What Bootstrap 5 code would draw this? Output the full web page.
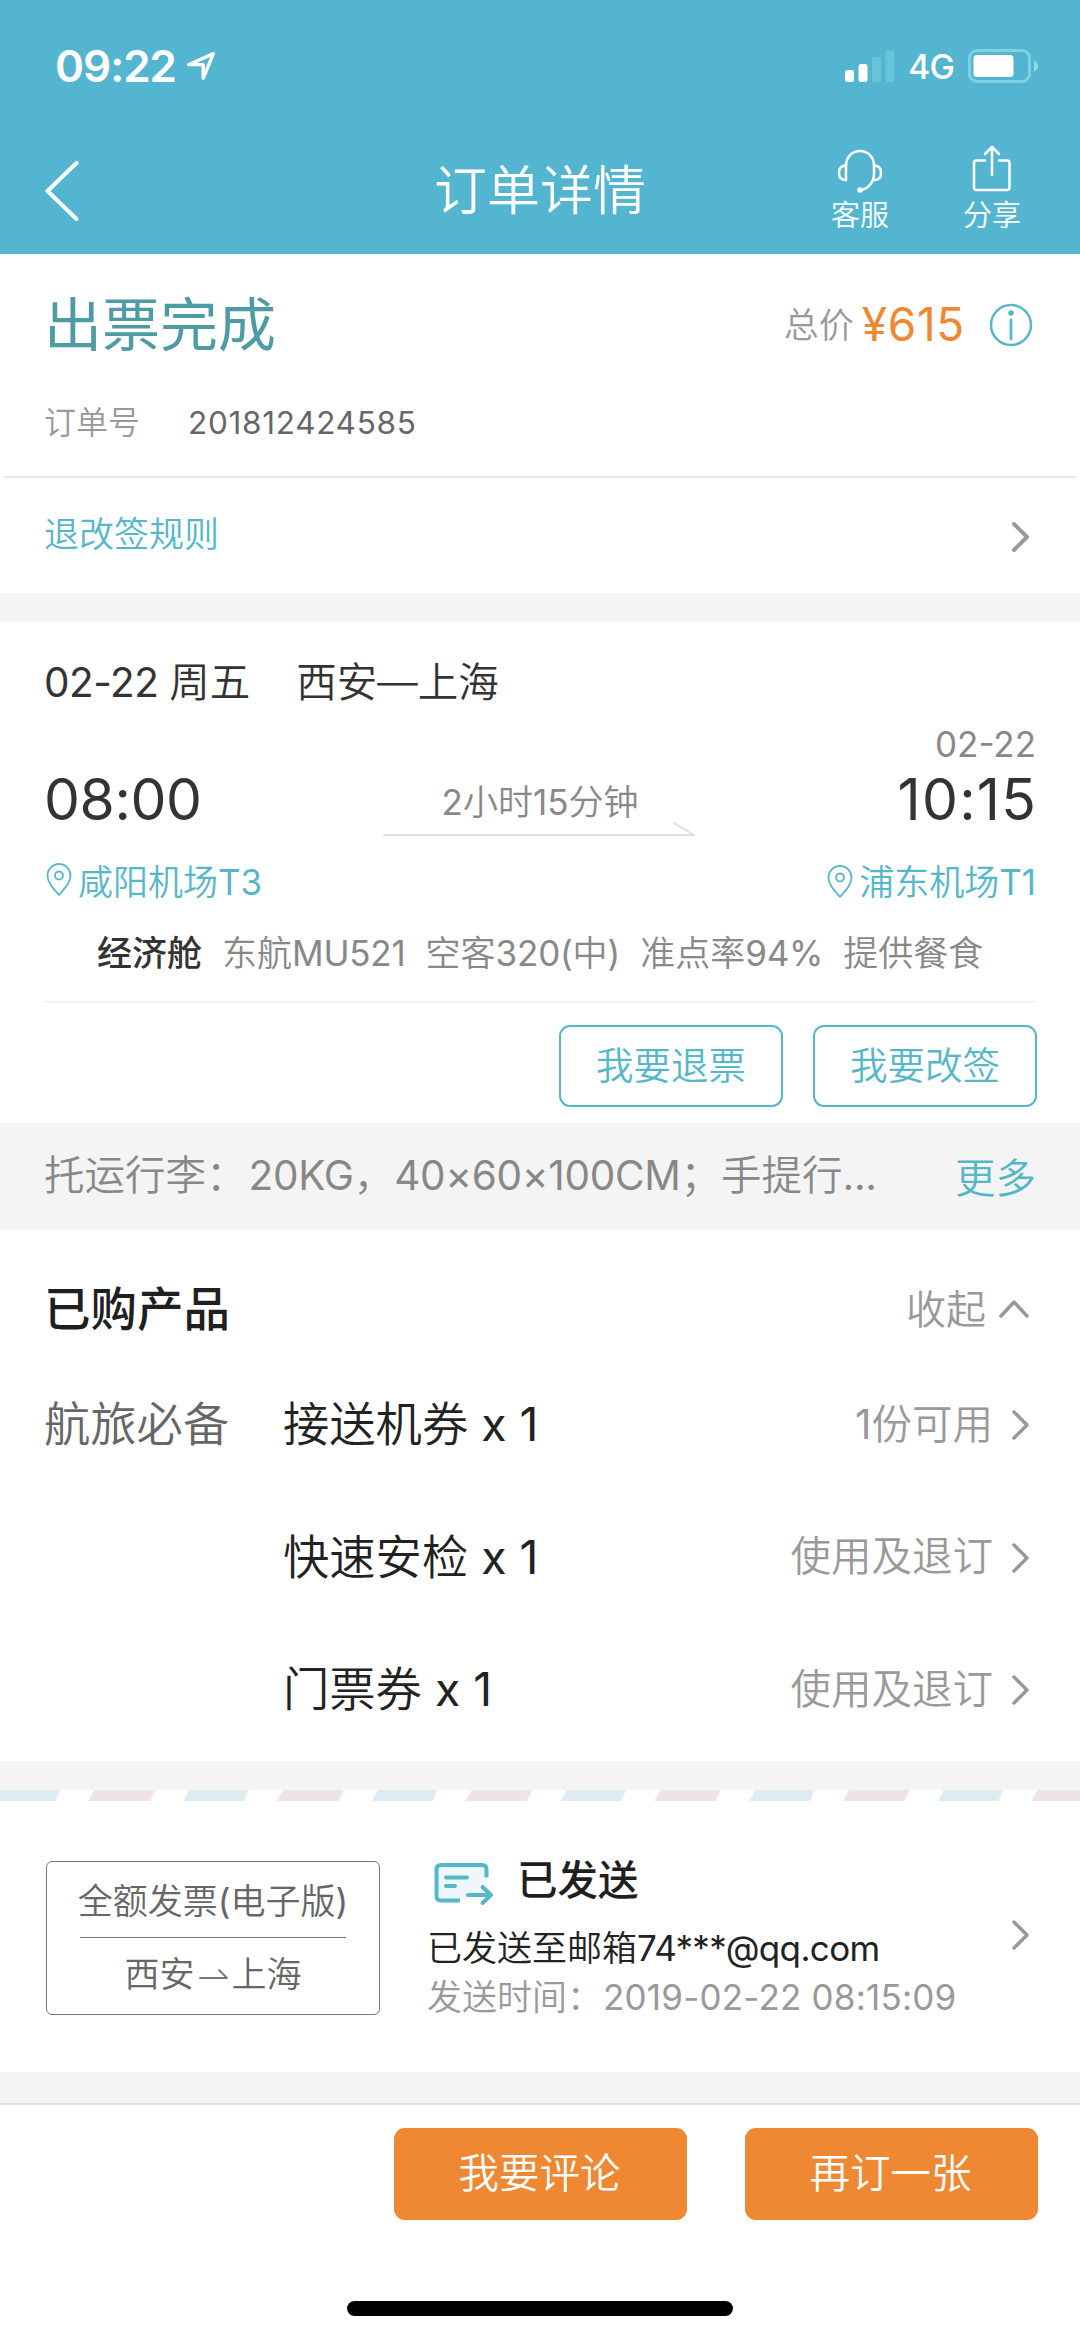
<!DOCTYPE html>
<html lang="zh-CN">
<head>
<meta charset="utf-8">
<meta name="viewport" content="width=device-width, initial-scale=1">
<title>订单详情</title>
<link href="https://cdn.jsdelivr.net/npm/bootstrap@5.3.0/dist/css/bootstrap.min.css" rel="stylesheet">
<style>
:root{--sky:#54b5d0;--teal:#56b7c9;--orange:#ee8833}
body{width:1080px;height:2339px;background:#fff;color:#222;font-family:Inter,"Noto Sans CJK SC",sans-serif;font-size:35px;line-height:1.2;font-weight:350;overflow:hidden}
svg{display:block;flex:none;fill:none;stroke-linecap:round;stroke-linejoin:round}
a{color:var(--teal);text-decoration:none}
.latin{font-weight:400}
.pad{padding-left:44px;padding-right:44px}
.g3{color:#333}.g6{color:#666}.g8{color:#888}.g9{color:#999}
.band{background:#f4f4f4;height:29px}
.band-end{height:31px}
.hair{height:2px;background:#e6e8e9}

.topbar{height:254px;background:var(--sky);color:#fff}
.statusbar{height:132px;padding:0 40px 0 55px}
.clock{font-size:44px;font-weight:600;letter-spacing:-1px}
.locate{margin-left:10px}
.net{font-size:34px;font-weight:450;letter-spacing:-.9px;margin:2px 14px 0 13px}
.titlebar{height:122px;padding-bottom:4px}
.titlebar h1{font-size:53px;font-weight:350;line-height:1;margin:0}
.side{width:300px}
.tools{padding-left:50px;gap:72px}
.tool{width:60px;font-size:29px;line-height:34px}

.state-row{height:142px;padding-right:46px}
.state{font-size:58px;font-weight:400;color:#4f9ba3;line-height:1;margin:0}
.cost{font-size:46px;color:var(--orange);letter-spacing:.7px;margin-right:-1px}
.orderno{height:80px;padding-bottom:26px;font-size:32px}
.orderno .num{font-size:31.5px;letter-spacing:.7px;margin-left:48px}
.rules{height:115px;padding-bottom:3px}
.rules svg{margin-top:6px}

.flight{height:501px}
.leg{height:101px;font-size:40.5px;line-height:80px;padding-top:21px}
.leg .latin{letter-spacing:-.5px}
.leg .route{margin-left:46px}
.times{display:grid;grid-template-columns:1fr auto 1fr;align-items:end;height:106px}
.clocktime{font-size:57px;line-height:60px;letter-spacing:-.4px;margin-top:5px}
.arrive{letter-spacing:1.2px;margin-right:-1px}
.span-time{display:flex;flex-direction:column;align-items:center;margin-bottom:-7px}
.span-time svg{margin-top:-2px}
.ports{height:106px}
.pin{margin-left:-1px;margin-right:3px}
.ports a:first-child .pin{margin-bottom:5px}
.info{height:66px;padding-left:97px;gap:20px;line-height:36px}
.info .latin{letter-spacing:-.2px}
.info b{font-weight:500}
.info-line{width:992px;background:#f2f3f3}
.acts-line{gap:30px;padding:22px 43px 0}
.btn-line{width:224px;height:82px;border:2px solid var(--teal);border-radius:11px;color:var(--teal);font-size:37.5px;font-weight:350;padding:0}

.bag{background:#f4f4f4;height:107px;font-size:40.5px}
.bag a{padding-top:6px}
.bag .latin{letter-spacing:-.3px}
.bag .latin:first-child{margin-left:2px}
.goods{height:531px}
.goods-head{height:129px;padding-top:30px}
.goods-head h2{font-size:46.5px;font-weight:500;margin:0;color:#1f1f1f}
.fold{font-size:40px}
.goods-row{height:132.5px;font-size:46.3px}
.goods-row .use{font-size:40.5px;color:#999}
.kind{width:239px}
.chev{margin-left:17px}

.bill{height:271px;padding-left:46px}
.slip{width:334px;height:154px;margin-top:2px;border:1.5px solid #777;border-radius:6px;font-size:35px;color:#666;padding:0 33px}
.slip-name{height:75px;padding-top:4px;margin:0 -4px}
.slip-route{height:75px;border-top:1.5px solid #777;padding-bottom:2px}
.mail{margin-left:47px}
.sent{height:60px;font-size:40.5px;font-weight:500;color:#1f1f1f;margin-bottom:13px;padding-left:6px;gap:22px}
.sent svg{margin-top:5px}
.mail-line{line-height:49px}
.addr{letter-spacing:-.65px}
.stamp{letter-spacing:.2px;margin-left:1px}

.foot{height:236px;border-top:2px solid #e2e2e2}
.acts-fill{gap:58px;padding:23px 42px 0;margin-bottom:81px}
.btn-fill,.btn-fill:hover{width:293px;height:92px;border:0;border-radius:11px;background:var(--orange);color:#fff;font-size:40.5px;font-weight:350;padding:0 2px 0 0}
.homebar{width:386px;height:15px;border-radius:8px;background:#000}
</style>
</head>
<body>
<header class="topbar">
  <div class="statusbar d-flex align-items-center">
    <span class="clock">09:22</span>
    <svg class="locate" width="30" height="30" viewBox="0 0 34 34" stroke="#fff" stroke-width="3.800"><path d="M31 3 3 15.500H19.500V31Z"/></svg>
    <svg class="ms-auto" width="50" height="32" viewBox="0 0 50 32"><rect x="0" y="20" width="9" height="12" rx="2.500" fill="#fff"/><rect x="13.500" y="14" width="9" height="18" rx="2.500" fill="#fff"/><rect x="27" y="7" width="9" height="25" rx="2.500" fill="#67c4d9"/><rect x="40.500" y="0" width="9" height="32" rx="2.500" fill="#67c4d9"/></svg>
    <span class="net">4G</span>
    <svg width="72" height="34" viewBox="0 0 72 34"><rect x="1.500" y="1.500" width="60" height="31" rx="7.500" stroke="#7dd3e3" stroke-width="3"/><rect x="5.500" y="6" width="40" height="22" rx="3.500" fill="#fff"/><path d="M66 11.500Q70 13 70 17T66 22.500Z" fill="#8fdbe8"/></svg>
  </div>
  <nav class="titlebar d-flex align-items-center">
    <div class="side"><svg width="90" height="60" viewBox="0 0 90 60" stroke="#fff" stroke-width="4"><path d="M76.500 2 47.500 30 76.500 58"/></svg></div>
    <h1 class="flex-grow-1 text-center">订单详情</h1>
    <div class="side tools d-flex">
      <div class="tool text-center"><svg class="mx-auto" width="46" height="50" viewBox="0 4 46 50" stroke="#fff" stroke-width="2.500"><path d="M9 35V21C9 12 15 6 23 6S37 12 37 21V28C37 38 31 44 23 45"/><path d="M9 35C4 35 2 32 2 28S4 20.500 9 20.500M37 35C42 35 44 32 44 28S42 20.500 37 20.500"/><circle cx="23" cy="45" r="1.500" fill="#fff"/></svg>客服</div>
      <div class="tool text-center"><svg class="mx-auto" width="42" height="50" viewBox="0 4 42 50" stroke="#fff" stroke-width="2.500" overflow="visible"><path d="M14 15.500H5.500Q3 15.500 3 18V42.500Q3 45 5.500 45H36Q38.500 45 38.500 42.500V18Q38.500 15.500 36 15.500H28M21 30V2M14 9 21 2 28 9"/></svg>分享</div>
    </div>
  </nav>
</header>
<main>
  <section>
    <div class="state-row pad d-flex align-items-center">
      <h2 class="state">出票完成</h2>
      <span class="ms-auto g9">总价</span>
      <span class="cost latin ms-2">¥615</span>
      <svg class="ms-4" width="46" height="46" viewBox="0 0 46 46" stroke="#56b7c9" stroke-width="2.500"><circle cx="23" cy="23" r="20"/><path d="M23 18V37" stroke-width="2.800"/><circle cx="23" cy="11" r="1.500" fill="#56b7c9"/></svg>
    </div>
    <div class="orderno pad d-flex align-items-center"><span class="g9">订单号</span><span class="num latin g6">201812424585</span></div>
    <div class="hair mx-1"></div>
    <a href="#" class="rules pad d-flex align-items-center">退改签规则
      <svg class="ms-auto" width="26" height="34" viewBox="0 0 26 34" stroke="#999" stroke-width="4"><path d="M4 4 17 17 4 30"/></svg></a>
  </section>
  <div class="band"></div>
  <section class="flight">
    <div class="leg pad g3"><span class="latin">02-22 </span>周五<span class="route">西安—上海</span></div>
    <div class="times pad g3">
      <div class="clocktime latin">08:00</div>
      <div class="span-time g8"><span><span class="latin">2</span>小时<span class="latin">15</span>分钟</span><svg width="314" height="16" viewBox="0 0 314 16" stroke="#dedede" stroke-width="2"><path d="M1 14H311L291 2"/></svg></div>
      <div class="text-end latin"><div class="g8">02-22</div><div class="clocktime arrive">10:15</div></div>
    </div>
    <div class="ports pad d-flex align-items-center justify-content-between">
      <a href="#" class="d-flex align-items-center"><svg class="pin" width="32" height="34" viewBox="0 0 32 34" stroke="#56b7c9" stroke-width="1.800"><path d="M16 32C9 24 4.500 19 4.500 12.500a11.500 11.500 0 0 1 23 0C27.500 19 23 24 16 32Z"/><circle cx="16" cy="12.500" r="4"/></svg>咸阳机场<span class="latin">T3</span></a>
      <a href="#" class="d-flex align-items-center"><svg class="pin" width="32" height="34" viewBox="0 0 32 34" stroke="#56b7c9" stroke-width="1.800"><path d="M16 32C9 24 4.500 19 4.500 12.500a11.500 11.500 0 0 1 23 0C27.500 19 23 24 16 32Z"/><circle cx="16" cy="12.500" r="4"/></svg>浦东机场<span class="latin">T1</span></a>
    </div>
    <div class="info d-flex g8"><b class="g3">经济舱</b><span>东航<span class="latin">MU521</span></span><span>空客<span class="latin">320(</span>中<span class="latin">)</span></span><span>准点率<span class="latin">94%</span></span><span>提供餐食</span></div>
    <div class="hair info-line mx-auto"></div>
    <div class="acts-line d-flex justify-content-end"><button class="btn btn-line" type="button">我要退票</button><button class="btn btn-line" type="button">我要改签</button></div>
  </section>
  <div class="bag pad g8 d-flex align-items-center justify-content-between"><span>托运行李：<span class="latin">20KG</span>，<span class="latin">40×60×100CM</span>；手提行<span class="latin">...</span></span><a href="#">更多</a></div>
  <section class="goods">
    <div class="goods-head pad d-flex align-items-center justify-content-between"><h2>已购产品</h2><span class="fold g9 d-flex align-items-center">收起<svg class="ms-2" width="42" height="26" viewBox="0 0 42 26" stroke="#999" stroke-width="3.500"><path d="M7 19 20 5 33 19"/></svg></span></div>
    <div class="goods-row pad d-flex align-items-center"><span class="kind g6">航旅必备</span><span>接送机券<span class="latin"> x 1</span></span><span class="use ms-auto"><span class="latin">1</span>份可用</span><svg class="chev" width="26" height="34" viewBox="0 0 26 34" stroke="#999" stroke-width="3.500"><path d="M4 4 17 17 4 30"/></svg></div>
    <div class="goods-row pad d-flex align-items-center"><span class="kind"></span><span>快速安检<span class="latin"> x 1</span></span><span class="use ms-auto">使用及退订</span><svg class="chev" width="26" height="34" viewBox="0 0 26 34" stroke="#999" stroke-width="3.500"><path d="M4 4 17 17 4 30"/></svg></div>
    <div class="goods-row pad d-flex align-items-center"><span class="kind"></span><span>门票券<span class="latin"> x 1</span></span><span class="use ms-auto">使用及退订</span><svg class="chev" width="26" height="34" viewBox="0 0 26 34" stroke="#999" stroke-width="3.500"><path d="M4 4 17 17 4 30"/></svg></div>
  </section>
  <div class="band"></div>
  <svg width="1080" height="11" viewBox="0 0 1080 11">
    <defs><pattern id="airmail" width="188.600" height="11" patternUnits="userSpaceOnUse"><path d="M0 0H60L55.500 11H0Z M188.600 0V11H183.500L189.500 0Z" fill="#dcecf0"/><path d="M94.500 0H155L150 11H88.500Z" fill="#efe3e5"/></pattern></defs>
    <rect width="1080" height="11" fill="url(#airmail)"/>
  </svg>
  <section class="bill pad d-flex align-items-center">
    <div class="slip text-center">
      <div class="slip-name d-flex align-items-center justify-content-center text-nowrap">全额发票<span class="latin">(</span>电子版<span class="latin">)</span></div>
      <div class="slip-route d-flex align-items-center justify-content-center">西安<svg class="mx-1" width="29" height="16" viewBox="0 0 29 16" stroke="#777" stroke-width="1.800"><path d="M1 12H28L20 4"/></svg>上海</div>
    </div>
    <div class="mail">
      <div class="d-flex align-items-center sent"><svg width="62" height="46" viewBox="0 0 62 46" stroke="#56b7c9" stroke-width="4"><path d="M6 4H50Q54 4 54 8V28L36 38H8Q4 38 4 34V8Q4 4 8 4Z" fill="#eef8fa" stroke="none"/><path d="M27 39.500H8Q3.500 39.500 3.500 35V8.500Q3.500 4 8 4H49Q53.500 4 53.500 8.500V16.500" stroke-linecap="butt"/><path d="M13 16.500H34M13 25H22M35 34H58M49.500 26 58 34 49.500 42"/></svg><span>已发送</span></div>
      <div class="mail-line">已发送至邮箱<span class="addr latin">74***@qq.com</span></div>
      <div class="mail-line g9">发送时间：<span class="stamp latin">2019-02-22 08:15:09</span></div>
    </div>
    <svg class="ms-auto mb-1" width="26" height="34" viewBox="0 0 26 34" stroke="#999" stroke-width="3.500"><path d="M4 4 17 17 4 30"/></svg>
  </section>
  <div class="band band-end"></div>
</main>
<footer class="foot d-flex flex-column align-items-center">
  <div class="acts-fill d-flex justify-content-end w-100"><button class="btn btn-fill" type="button">我要评论</button><button class="btn btn-fill" type="button">再订一张</button></div>
  <div class="homebar"></div>
</footer>
<script src="https://cdn.jsdelivr.net/npm/bootstrap@5.3.0/dist/js/bootstrap.bundle.min.js"></script>
</body>
</html>
